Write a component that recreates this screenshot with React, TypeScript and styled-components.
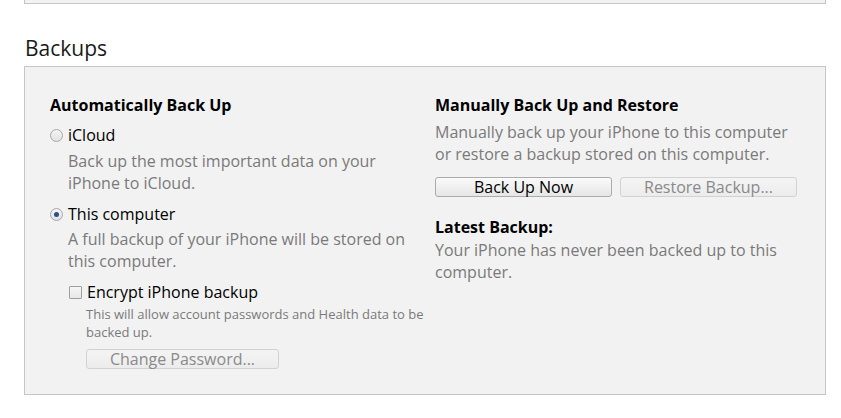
import React from "react";
import styled, { createGlobalStyle } from "styled-components";

const GlobalStyle = createGlobalStyle`
  html, body {
    margin: 0;
    padding: 0;
    background: #ffffff;
  }
  body {
    font-family: "Open Sans", "Noto Sans", sans-serif;
    color: #000;
  }
`;

const Page = styled.div`
  width: 841px;
  height: 418px;
  overflow: hidden;
  padding: 0 15px 0 24px;
  box-sizing: border-box;
`;

const PrevPanel = styled.div`
  height: 3px;
  border: 1px solid #c6c6c6;
  border-top: none;
  background: #f2f2f2;
`;

const SectionTitle = styled.h2`
  margin: 0;
  padding: 29px 0 0 1px;
  height: 33px;
  font-size: 21px;
  font-weight: 400;
  line-height: 30px;
  color: #1a1a1a;
`;

const Panel = styled.div`
  height: 329px;
  box-sizing: border-box;
  border: 1px solid #c6c6c6;
  background: #f2f2f2;
  padding: 27px 0 0 25px;
  display: grid;
  grid-template-columns: 385px 370px;
  align-items: start;
`;

const Column = styled.div`
  display: flex;
  flex-direction: column;
`;

const Heading = styled.div<{ $gap?: number }>`
  font-size: 16px;
  font-weight: 700;
  line-height: 22px;
  margin-top: ${(p) => p.$gap ?? 0}px;
`;

const Option = styled.label<{ $gap?: number; $indent?: number }>`
  display: flex;
  align-items: center;
  gap: 5px;
  font-size: 16px;
  line-height: 22px;
  padding-left: ${(p) => p.$indent ?? 0}px;
  margin-top: ${(p) => p.$gap ?? 0}px;
`;

const Desc = styled.div<{ $indent?: number; $small?: boolean; $gap?: number }>`
  padding-left: ${(p) => p.$indent ?? 0}px;
  margin-top: ${(p) => p.$gap ?? 0}px;
  font-size: ${(p) => (p.$small ? 13 : 16)}px;
  line-height: ${(p) => (p.$small ? 18 : 22)}px;
  color: #7a7a7a;
`;

const Radio = styled.span<{ $on?: boolean }>`
  width: 11px;
  height: 11px;
  border-radius: 50%;
  border: 1px solid #a8a8a8;
  background: linear-gradient(#f4f4f4, #e2e2e2);
  display: inline-flex;
  align-items: center;
  justify-content: center;
  flex: none;
  &::after {
    content: "";
    width: 5px;
    height: 5px;
    border-radius: 50%;
    background: ${(p) => (p.$on ? "#2d4f85" : "transparent")};
  }
`;

const Check = styled.span`
  width: 11px;
  height: 11px;
  border: 1px solid #a0a0a0;
  border-radius: 1px;
  background: linear-gradient(#f6f6f6, #e6e6e6);
  flex: none;
`;

const Button = styled.button<{ $width: number; $disabled?: boolean }>`
  width: ${(p) => p.$width}px;
  height: 20px;
  padding: 0;
  font-family: inherit;
  font-size: 16px;
  line-height: 18px;
  color: ${(p) => (p.$disabled ? "#8a8a8a" : "#000")};
  border: 1px solid ${(p) => (p.$disabled ? "#d2d2d2" : "#acacac")};
  border-radius: 3px;
  background: ${(p) =>
    p.$disabled
      ? "linear-gradient(#f4f4f4, #ececec)"
      : "linear-gradient(#fafafa, #e6e6e6)"};
`;

const ButtonRow = styled.div<{ $indent?: number; $gap?: number }>`
  display: flex;
  gap: 8px;
  padding-left: ${(p) => p.$indent ?? 0}px;
  margin-top: ${(p) => p.$gap ?? 0}px;
`;

export default function App() {
  return (
    <>
      <GlobalStyle />
      <Page>
        <PrevPanel />
        <SectionTitle>Backups</SectionTitle>
        <Panel>
          <Column>
            <Heading>Automatically Back Up</Heading>
            <Option $gap={8}>
              <Radio />
              iCloud
            </Option>
            <Desc $indent={18} $gap={4}>
              Back up the most important data on your
              <br />
              iPhone to iCloud.
            </Desc>
            <Option $gap={9}>
              <Radio $on />
              This computer
            </Option>
            <Desc $indent={18} $gap={3}>
              A full backup of your iPhone will be stored on
              <br />
              this computer.
            </Desc>
            <Option $gap={9} $indent={19}>
              <Check />
              Encrypt iPhone backup
            </Option>
            <Desc $indent={36} $small $gap={2}>
              This will allow account passwords and Health data to be
              <br />
              backed up.
            </Desc>
            <ButtonRow $indent={36} $gap={8}>
              <Button $width={193} $disabled>
                Change Password...
              </Button>
            </ButtonRow>
          </Column>
          <Column>
            <Heading>Manually Back Up and Restore</Heading>
            <Desc $gap={5}>
              Manually back up your iPhone to this computer
              <br />
              or restore a backup stored on this computer.
            </Desc>
            <ButtonRow $gap={12}>
              <Button $width={177}>Back Up Now</Button>
              <Button $width={177} $disabled>
                Restore Backup...
              </Button>
            </ButtonRow>
            <Heading $gap={19}>Latest Backup:</Heading>
            <Desc $gap={1}>
              Your iPhone has never been backed up to this
              <br />
              computer.
            </Desc>
          </Column>
        </Panel>
      </Page>
    </>
  );
}
